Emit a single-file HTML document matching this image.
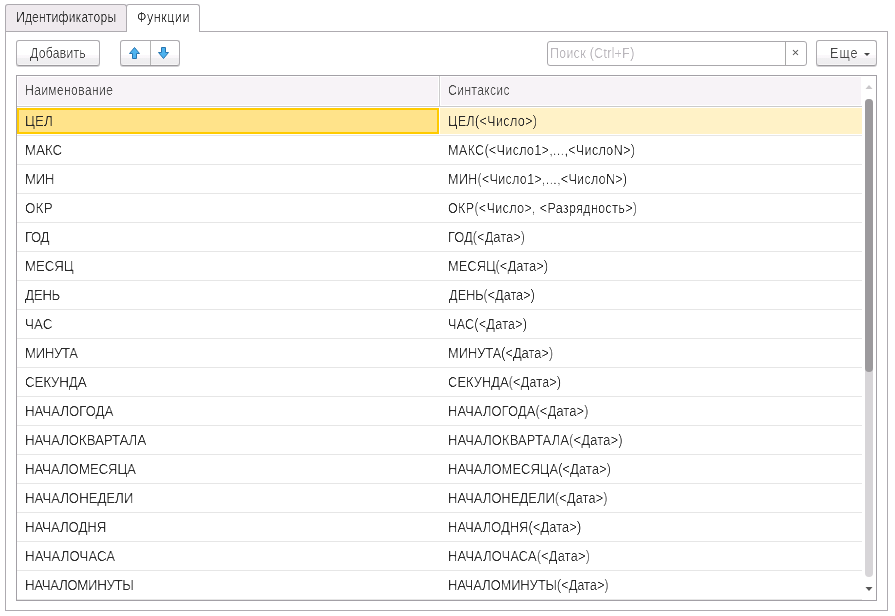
<!DOCTYPE html>
<html><head><meta charset="utf-8">
<style>
*{box-sizing:border-box;margin:0;padding:0}
html,body{width:895px;height:616px;overflow:hidden;background:#fff}
body{position:relative;font-family:"Liberation Sans",sans-serif;font-size:14px;color:#333}
.a{position:absolute}
.t{position:absolute;white-space:pre;line-height:16px;font-size:14px;transform-origin:0 0;z-index:5;will-change:transform;filter:url(#cr)}
.tab1{left:5px;top:4px;width:122px;height:27px;background:#EFEAEE;border:1px solid #ADAAAF;border-bottom:none;border-radius:3px 3px 0 0}
.tab2{left:126px;top:4px;width:74px;height:28px;background:#fff;border:1px solid #ADAAAF;border-bottom:none;border-radius:3px 3px 0 0}
.panel{left:5px;top:31px;width:883px;height:580px;border:1px solid #AEABB0}
.btn{position:absolute;border:1px solid #ADABAF;border-bottom-color:#9C9A9E;border-radius:3px;background:linear-gradient(#fff 0,#fff 14px,#FBF8FB 14px,#FAF7FA 17px,#F1F0F2 17px,#EEEDEF 23px,#F7F6F7 23px);box-shadow:0 1px 0 #D2D0D3}
.search{left:547px;top:41px;width:260px;height:25px;border:1px solid #AAA8AC;border-radius:3px;background:#fff}
.tbl{left:16px;top:75px;width:861px;height:526px;border:1px solid #A3A0A6}
.hdr{top:77px;height:28px;background:#F7F3F7}
.rl{left:17px;width:845px;height:1px;background:#E6E6E6}
</style></head><body>
<svg width="0" height="0" style="position:absolute"><filter id="cr" x="-5%" y="-20%" width="110%" height="140%"><feComponentTransfer><feFuncA type="linear" slope="1.8" intercept="-0.5"/></feComponentTransfer></filter></svg>
<div class="a panel"></div>
<div class="a tab1"></div>
<div class="a tab2"></div>
<div class="a" style="left:127px;top:31px;width:72px;height:1px;background:#fff"></div>

<div class="btn" style="left:16px;top:40px;width:84px;height:26px"></div>
<div class="btn" style="left:120px;top:40px;width:60px;height:26px"></div>
<div class="a" style="left:150px;top:41px;width:1px;height:24px;background:#B4B4B4"></div>
<svg class="a" style="left:124px;top:42px" width="50" height="22" viewBox="0 0 50 22">
<path d="M10.5 5.5 L15.5 11.5 L12.5 11.5 L12.5 16.5 L8.5 16.5 L8.5 11.5 L5.5 11.5 Z" fill="#4DB2EE" stroke="#2674B0" stroke-width="1"/>
<path d="M37.5 5.5 L41.5 5.5 L41.5 10.5 L44.5 10.5 L39.5 16.5 L34.5 10.5 L37.5 10.5 Z" fill="#4DB2EE" stroke="#2674B0" stroke-width="1"/>
</svg>

<div class="a search"></div>
<div class="a" style="left:785px;top:42px;width:1px;height:23px;background:#A8A8A8"></div>
<svg class="a" style="left:790px;top:47px" width="12" height="12" viewBox="0 0 12 12">
<path d="M3 3 L8 8 M8 3 L3 8" stroke="#505050" stroke-width="1.05"/>
</svg>

<div class="btn" style="left:816px;top:40px;width:61px;height:26px"></div>
<svg class="a" style="left:864px;top:53px" width="6" height="4" viewBox="0 0 6 4"><path d="M0 0 L6 0 L3 3 Z" fill="#444"/></svg>

<div class="a tbl"></div>
<div class="a hdr" style="left:18px;width:420px"></div>
<div class="a hdr" style="left:441px;width:420px"></div>
<div class="a" style="left:439px;top:76px;width:1px;height:30px;background:#CBCBCB"></div>
<div class="a" style="left:17px;top:106px;width:845px;height:1px;background:#CBCBCB"></div>
<div class="a" style="left:17px;top:108px;width:422px;height:26px;background:#FFE38A;border:2px solid #FFCB00"></div>
<div class="a" style="left:440px;top:108px;width:422px;height:26px;background:#FFF2C7"></div>
<div class="a rl" style="top:135px"></div><div class="a rl" style="top:164px"></div><div class="a rl" style="top:193px"></div><div class="a rl" style="top:222px"></div><div class="a rl" style="top:251px"></div><div class="a rl" style="top:280px"></div><div class="a rl" style="top:309px"></div><div class="a rl" style="top:338px"></div><div class="a rl" style="top:367px"></div><div class="a rl" style="top:396px"></div><div class="a rl" style="top:425px"></div><div class="a rl" style="top:454px"></div><div class="a rl" style="top:483px"></div><div class="a rl" style="top:512px"></div><div class="a rl" style="top:541px"></div><div class="a rl" style="top:570px"></div><div class="a rl" style="top:599px"></div>
<svg class="a" style="left:865px;top:84px" width="8" height="6" viewBox="0 0 8 6"><path d="M0.5 5 L7.5 5 L4 1 Z" fill="#C9C7CA"/></svg>
<div class="a" style="left:865px;top:99px;width:8px;height:478px;border-radius:4px;background:#D7D5D8"></div>
<div class="a" style="left:865px;top:99px;width:8px;height:273px;border-radius:4px;background:#9C9A9D"></div>
<svg class="a" style="left:865px;top:586px" width="8" height="6" viewBox="0 0 8 6"><path d="M0.5 1 L7.5 1 L4 5 Z" fill="#555"/></svg>
<div class="t" style="left:15.83px;top:9px;color:#2E2E2E;letter-spacing:0.189px;transform:scaleX(0.8664)">Идентификаторы</div>
<div class="t" style="left:137.13px;top:9px;color:#2E2E2E;letter-spacing:0.809px;transform:scaleX(0.8729)">Функции</div>
<div class="t" style="left:30.00px;top:45px;color:#454545;letter-spacing:0.271px;transform:scaleX(0.8712)">Добавить</div>
<div class="t" style="left:550.11px;top:45px;color:#BAB7BC;letter-spacing:0.312px;transform:scaleX(0.8907)">Поиск (Ctrl+F)</div>
<div class="t" style="left:830.11px;top:45px;color:#454545;letter-spacing:1.107px;transform:scaleX(0.8900)">Еще</div>
<div class="t" style="left:25.13px;top:82px;color:#4A4A4A;letter-spacing:0.376px;transform:scaleX(0.8675)">Наименование</div>
<div class="t" style="left:448.13px;top:82px;color:#4A4A4A;letter-spacing:0.371px;transform:scaleX(0.8700)">Синтаксис</div>
<div class="t" style="left:25.05px;top:113px;color:#2B2B2B;letter-spacing:0.184px;transform:scaleX(0.9500)">ЦЕЛ</div>
<div class="t" style="left:448.10px;top:113px;color:#2B2B2B;letter-spacing:0.331px;transform:scaleX(0.9033)">ЦЕЛ(&lt;Число&gt;)</div>
<div class="t" style="left:25.05px;top:142px;color:#2B2B2B;letter-spacing:0.018px;transform:scaleX(0.9500)">МАКС</div>
<div class="t" style="left:448.10px;top:142px;color:#2B2B2B;letter-spacing:0.319px;transform:scaleX(0.9011)">МАКС(&lt;Число1&gt;,...,&lt;ЧислоN&gt;)</div>
<div class="t" style="left:25.05px;top:171px;color:#2B2B2B;letter-spacing:-0.526px;transform:scaleX(0.9500)">МИН</div>
<div class="t" style="left:448.10px;top:171px;color:#2B2B2B;letter-spacing:0.300px;transform:scaleX(0.8992)">МИН(&lt;Число1&gt;,...,&lt;ЧислоN&gt;)</div>
<div class="t" style="left:25.05px;top:200px;color:#2B2B2B;letter-spacing:0.368px;transform:scaleX(0.9500)">ОКР</div>
<div class="t" style="left:448.11px;top:200px;color:#2B2B2B;letter-spacing:0.450px;transform:scaleX(0.8885)">ОКР(&lt;Число&gt;, &lt;Разрядность&gt;)</div>
<div class="t" style="left:25.05px;top:229px;color:#2B2B2B;letter-spacing:-0.526px;transform:scaleX(0.9500)">ГОД</div>
<div class="t" style="left:448.09px;top:229px;color:#2B2B2B;letter-spacing:0.144px;transform:scaleX(0.9073)">ГОД(&lt;Дата&gt;)</div>
<div class="t" style="left:25.05px;top:258px;color:#2B2B2B;letter-spacing:-0.132px;transform:scaleX(0.9500)">МЕСЯЦ</div>
<div class="t" style="left:448.09px;top:258px;color:#2B2B2B;letter-spacing:0.103px;transform:scaleX(0.9138)">МЕСЯЦ(&lt;Дата&gt;)</div>
<div class="t" style="left:24.90px;top:287px;color:#2B2B2B;letter-spacing:-0.333px;transform:scaleX(0.9500)">ДЕНЬ</div>
<div class="t" style="left:449.00px;top:287px;color:#2B2B2B;letter-spacing:-0.062px;transform:scaleX(0.9108)">ДЕНЬ(&lt;Дата&gt;)</div>
<div class="t" style="left:25.05px;top:316px;color:#2B2B2B;letter-spacing:0.211px;transform:scaleX(0.9500)">ЧАС</div>
<div class="t" style="left:448.09px;top:316px;color:#2B2B2B;letter-spacing:0.198px;transform:scaleX(0.9073)">ЧАС(&lt;Дата&gt;)</div>
<div class="t" style="left:25.05px;top:345px;color:#2B2B2B;letter-spacing:-0.474px;transform:scaleX(0.9500)">МИНУТА</div>
<div class="t" style="left:448.08px;top:345px;color:#2B2B2B;letter-spacing:-0.013px;transform:scaleX(0.9164)">МИНУТА(&lt;Дата&gt;)</div>
<div class="t" style="left:25.05px;top:374px;color:#2B2B2B;letter-spacing:-0.140px;transform:scaleX(0.9500)">СЕКУНДА</div>
<div class="t" style="left:448.08px;top:374px;color:#2B2B2B;letter-spacing:0.067px;transform:scaleX(0.9187)">СЕКУНДА(&lt;Дата&gt;)</div>
<div class="t" style="left:25.05px;top:403px;color:#2B2B2B;letter-spacing:-0.070px;transform:scaleX(0.9500)">НАЧАЛОГОДА</div>
<div class="t" style="left:448.08px;top:403px;color:#2B2B2B;letter-spacing:0.100px;transform:scaleX(0.9239)">НАЧАЛОГОДА(&lt;Дата&gt;)</div>
<div class="t" style="left:25.05px;top:432px;color:#2B2B2B;letter-spacing:-0.097px;transform:scaleX(0.9500)">НАЧАЛОКВАРТАЛА</div>
<div class="t" style="left:448.07px;top:432px;color:#2B2B2B;letter-spacing:0.116px;transform:scaleX(0.9286)">НАЧАЛОКВАРТАЛА(&lt;Дата&gt;)</div>
<div class="t" style="left:25.05px;top:461px;color:#2B2B2B;letter-spacing:-0.129px;transform:scaleX(0.9500)">НАЧАЛОМЕСЯЦА</div>
<div class="t" style="left:448.07px;top:461px;color:#2B2B2B;letter-spacing:0.046px;transform:scaleX(0.9265)">НАЧАЛОМЕСЯЦА(&lt;Дата&gt;)</div>
<div class="t" style="left:25.05px;top:490px;color:#2B2B2B;letter-spacing:-0.081px;transform:scaleX(0.9500)">НАЧАЛОНЕДЕЛИ</div>
<div class="t" style="left:448.07px;top:490px;color:#2B2B2B;letter-spacing:0.028px;transform:scaleX(0.9265)">НАЧАЛОНЕДЕЛИ(&lt;Дата&gt;)</div>
<div class="t" style="left:25.05px;top:519px;color:#2B2B2B;letter-spacing:-0.138px;transform:scaleX(0.9500)">НАЧАЛОДНЯ</div>
<div class="t" style="left:448.08px;top:519px;color:#2B2B2B;letter-spacing:0.051px;transform:scaleX(0.9224)">НАЧАЛОДНЯ(&lt;Дата&gt;)</div>
<div class="t" style="left:25.05px;top:548px;color:#2B2B2B;letter-spacing:0.029px;transform:scaleX(0.9500)">НАЧАЛОЧАСА</div>
<div class="t" style="left:448.08px;top:548px;color:#2B2B2B;letter-spacing:0.136px;transform:scaleX(0.9239)">НАЧАЛОЧАСА(&lt;Дата&gt;)</div>
<div class="t" style="left:25.05px;top:577px;color:#2B2B2B;letter-spacing:-0.397px;transform:scaleX(0.9500)">НАЧАЛОМИНУТЫ</div>
<div class="t" style="left:448.07px;top:577px;color:#2B2B2B;letter-spacing:-0.126px;transform:scaleX(0.9265)">НАЧАЛОМИНУТЫ(&lt;Дата&gt;)</div>
</body></html>
